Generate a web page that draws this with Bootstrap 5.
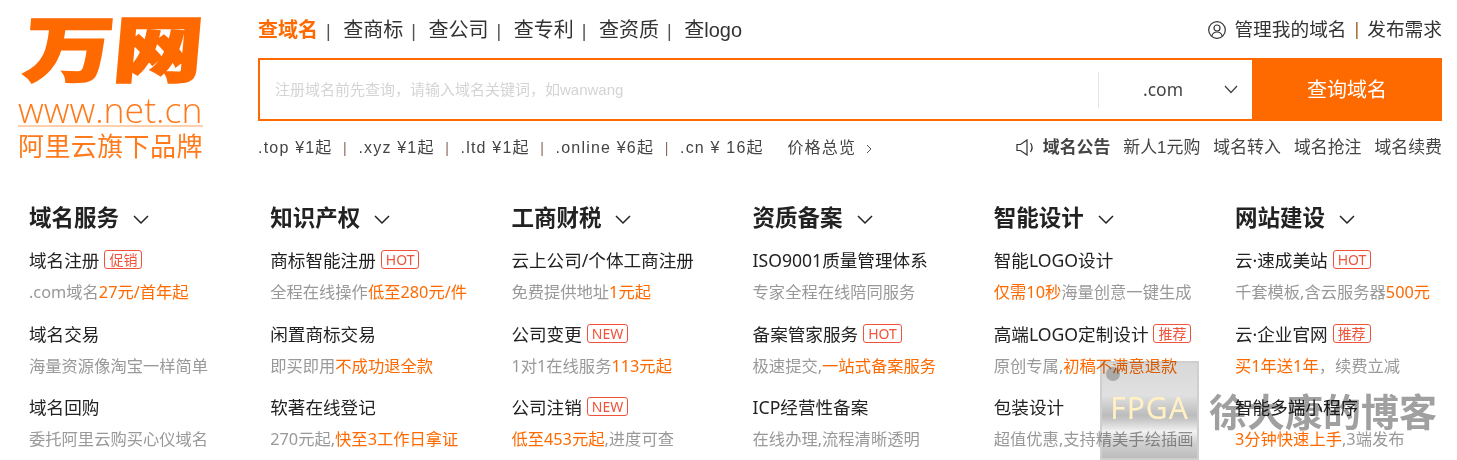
<!DOCTYPE html>
<html lang="zh-CN">
<head>
<meta charset="UTF-8" />
<title>万网</title>
<link href="https://cdn.jsdelivr.net/npm/bootstrap@5.3.0/dist/css/bootstrap.min.css" rel="stylesheet" />
<style>
  html, body { height: 460px; overflow: hidden; }
  body { position: relative; background: #fff; color: #333; font-family: "Noto Sans", "Noto Sans CJK SC", sans-serif; }
  a { color: inherit; text-decoration: none; }
  .orange { color: #ff6a00; }
  .top-wrap { padding: 0 15px 0 17px; }
  .logo-box { width: 241px; height: 170px; flex: none; padding-left: 1px; color: #ff6a00; }
  .logo-cn { font-family: "Noto Sans CJK SC", sans-serif; font-weight: 900; font-size: 72px; line-height: 72px; height: 91px; padding-top: 9px; -webkit-text-stroke: 2px #ff6a00; transform: translateX(3px) scaleX(1.24) skewX(-4deg); transform-origin: left bottom; white-space: nowrap; }
  .logo-url { font-family: "Open Sans", sans-serif; font-weight: 300; font-size: 35.6px; line-height: 36px; width: 185px; height: 32px; padding-bottom: 2px; border-bottom: 2px solid #ffd0ab; box-sizing: content-box; white-space: nowrap; color: #ff7a1a; }
  .logo-sub { font-family: "Noto Sans CJK SC", sans-serif; font-size: 26px; line-height: 36px; width: 185px; letter-spacing: .4px; white-space: nowrap; color: #ff7a1a; }
  .main-col { flex: 1; min-width: 0; }
  .search-nav { height: 58px; padding-top: 2px; font-family: "Liberation Sans", "Noto Sans CJK SC", sans-serif; font-size: 20px; color: #333; }
  .search-nav .sep { margin: 0 7px 0 8px; font-size: 18px; color: #555; }
  .user-links { font-size: 18.7px; }
  .search-nav .user-links .sep { margin: 0 8px 0 8px; color: #a0662e; }
  .search-box { height: 63px; border: 2px solid #ff6a00; }
  .search-input { flex: 1; min-width: 0; border: 0; outline: 0; padding: 2px 15px 0; font-size: 15px; font-family: "Liberation Sans", "Noto Sans CJK SC", sans-serif; }
  .search-input::placeholder { color: #d4d4d4; }
  .suffix-pick { width: 154px; border-left: 1px solid #e4e4e4; height: 36px; padding: 0 14px 0 44px; font-size: 17.5px; color: #444; }
  .search-btn { width: 190px; margin: -2px -2px -2px 0; background: #ff6a00; color: #fff; font-size: 20px; border: 0; border-radius: 0; }
  .search-btn:hover { background: #ff6a00; color: #fff; }
  .sub-row { height: 52px; padding-top: 2px; }
  .price-links { font-family: "Liberation Sans", "Noto Sans CJK SC", sans-serif; font-size: 16px; letter-spacing: 1.2px; color: #444; white-space: nowrap; }
  .price-links .sep { margin: 0 10.500px; font-size: 14px; color: #8a6a5a; }
  .price-all { margin-left: 18px; }
  .notice { font-family: "Liberation Sans", "Noto Sans CJK SC", sans-serif; font-size: 16.9px; color: #444; white-space: nowrap; }
  .notice b { color: #444; margin-right: 13px; }
  .notice a { margin-left: 13px; }
  .notice b + a { margin-left: 0; }
  .cat-grid { display: grid; grid-template-columns: repeat(6, 241.2px); padding-left: 29px; margin-top: 29px; }
  .cat-head { font-size: 22.5px; font-weight: 700; color: #222; line-height: 32px; margin-bottom: 13px; white-space: nowrap; }
  .cat-head svg { margin-left: 14px; vertical-align: 1px; }
  .cat-item { height: 73.5px; white-space: nowrap; }
  .cat-title { font-size: 17.6px; line-height: 26px; color: #222; }
  .cat-desc { font-size: 16.3px; line-height: 24px; margin-top: 7px; color: #999; }
  .tag { display: inline-block; font-size: 14px; line-height: 17px; padding: 0 4px; margin-left: 5px; border: 1px solid #f0533a; border-radius: 3px; color: #f0533a; vertical-align: 2px; }
  .wm-box { position: absolute; left: 1100px; top: 361px; width: 99px; height: 99px; mix-blend-mode: multiply; background: linear-gradient(#d8d8d8 0, #e0e0e0 34%, #bcbcbc 55%, #c8c8c8 60%, #f2f2f2 72%, #d0d0d0 85%, #bcbcbc 100%); border: 2px solid #cfcfcf; pointer-events: none; }
  .wm-dot { position: absolute; left: 4px; top: 4px; width: 14px; height: 14px; border-radius: 50%; background: #aaa; }
  .wm-fpga { position: absolute; left: 1100px; top: 361px; width: 99px; color: #fff1c4; font-size: 30px; line-height: 94px; text-align: center; pointer-events: none; letter-spacing: 1px; }
  .wm-text { position: absolute; left: 1209px; top: 387px; font-size: 38px; line-height: 46px; font-weight: 700; color: #a0a0a0; mix-blend-mode: multiply; white-space: nowrap; pointer-events: none; font-family: "Noto Sans CJK SC", sans-serif; }
</style>
</head>
<body>
  <div class="top-wrap d-flex">
    <a class="logo-box d-block" href="#">
      <div class="logo-cn">万网</div>
      <div class="logo-url">www.net.cn</div>
      <div class="logo-sub">阿里云旗下品牌</div>
    </a>
    <div class="main-col">
      <div class="search-nav d-flex align-items-center justify-content-between">
        <div>
          <a class="orange fw-bold" href="#">查域名</a><span class="sep">|</span>
          <a href="#">查商标</a><span class="sep">|</span>
          <a href="#">查公司</a><span class="sep">|</span>
          <a href="#">查专利</a><span class="sep">|</span>
          <a href="#">查资质</a><span class="sep">|</span>
          <a href="#">查logo</a>
        </div>
        <div class="user-links d-flex align-items-center">
          <svg width="18" height="18" viewBox="0 0 18 18" fill="none" stroke="#333" stroke-width="1.2" class="me-2"><circle cx="9" cy="9" r="8.300"/><circle cx="9" cy="7" r="3"/><path d="M3.800 15.200c.6-2.800 2.600-4.200 5.200-4.200s4.600 1.400 5.200 4.200"/></svg>
          <a href="#">管理我的域名</a><span class="sep">|</span><a href="#">发布需求</a>
        </div>
      </div>
      <div class="search-box d-flex align-items-center">
        <input class="search-input" type="text" placeholder="注册域名前先查询，请输入域名关键词，如wanwang" />
        <div class="suffix-pick d-flex align-items-center justify-content-between">
          <span>.com</span>
          <svg width="14" height="9" viewBox="0 0 14 9" fill="none" stroke="#444" stroke-width="1.3"><path d="M1 1l6 6.500L13 1"/></svg>
        </div>
        <button class="search-btn btn align-self-stretch" type="button">查询域名</button>
      </div>
      <div class="sub-row d-flex align-items-center justify-content-between">
        <div class="price-links">
          <a href="#">.top ¥1起</a><span class="sep">|</span><a href="#">.xyz ¥1起</a><span class="sep">|</span><a href="#">.ltd ¥1起</a><span class="sep">|</span><a href="#">.online ¥6起</a><span class="sep">|</span><a href="#">.cn ¥ 16起</a>
          <a class="price-all" href="#">价格总览
            <svg class="ms-1" width="7" height="10" viewBox="0 0 7 10" fill="none" stroke="#555" stroke-width="1"><path d="M1 1l4 4-4 4"/></svg></a>
        </div>
        <div class="notice d-flex align-items-center">
          <svg class="me-2" width="19" height="17" viewBox="0 0 19 17" fill="none" stroke="#333" stroke-width="1.2"><path d="M1 5.500h3.500L11 1v15L4.500 11.500H1z"/><path d="M14.500 4c2 2.800 2 6.200 0 9"/></svg>
          <b>域名公告</b><a href="#">新人1元购</a><a href="#">域名转入</a><a href="#">域名抢注</a><a href="#">域名续费</a>
        </div>
      </div>
    </div>
  </div>

  <div class="cat-grid">
    <div>
      <div class="cat-head">域名服务<svg width="16" height="10" viewBox="0 0 16 10" fill="none" stroke="#222" stroke-width="1.500"><path d="M1 1l7 7 7-7"/></svg></div>
      <div class="cat-item"><div class="cat-title">域名注册<span class="tag">促销</span></div><div class="cat-desc">.com域名<span class="orange">27元/首年起</span></div></div>
      <div class="cat-item"><div class="cat-title">域名交易</div><div class="cat-desc">海量资源像淘宝一样简单</div></div>
      <div class="cat-item"><div class="cat-title">域名回购</div><div class="cat-desc">委托阿里云购买心仪域名</div></div>
    </div>
    <div>
      <div class="cat-head">知识产权<svg width="16" height="10" viewBox="0 0 16 10" fill="none" stroke="#222" stroke-width="1.500"><path d="M1 1l7 7 7-7"/></svg></div>
      <div class="cat-item"><div class="cat-title">商标智能注册<span class="tag">HOT</span></div><div class="cat-desc">全程在线操作<span class="orange">低至280元/件</span></div></div>
      <div class="cat-item"><div class="cat-title">闲置商标交易</div><div class="cat-desc">即买即用<span class="orange">不成功退全款</span></div></div>
      <div class="cat-item"><div class="cat-title">软著在线登记</div><div class="cat-desc">270元起,<span class="orange">快至3工作日拿证</span></div></div>
    </div>
    <div>
      <div class="cat-head">工商财税<svg width="16" height="10" viewBox="0 0 16 10" fill="none" stroke="#222" stroke-width="1.500"><path d="M1 1l7 7 7-7"/></svg></div>
      <div class="cat-item"><div class="cat-title">云上公司/个体工商注册</div><div class="cat-desc">免费提供地址<span class="orange">1元起</span></div></div>
      <div class="cat-item"><div class="cat-title">公司变更<span class="tag">NEW</span></div><div class="cat-desc">1对1在线服务<span class="orange">113元起</span></div></div>
      <div class="cat-item"><div class="cat-title">公司注销<span class="tag">NEW</span></div><div class="cat-desc"><span class="orange">低至453元起</span>,进度可查</div></div>
    </div>
    <div>
      <div class="cat-head">资质备案<svg width="16" height="10" viewBox="0 0 16 10" fill="none" stroke="#222" stroke-width="1.500"><path d="M1 1l7 7 7-7"/></svg></div>
      <div class="cat-item"><div class="cat-title">ISO9001质量管理体系</div><div class="cat-desc">专家全程在线陪同服务</div></div>
      <div class="cat-item"><div class="cat-title">备案管家服务<span class="tag">HOT</span></div><div class="cat-desc">极速提交,<span class="orange">一站式备案服务</span></div></div>
      <div class="cat-item"><div class="cat-title">ICP经营性备案</div><div class="cat-desc">在线办理,流程清晰透明</div></div>
    </div>
    <div>
      <div class="cat-head">智能设计<svg width="16" height="10" viewBox="0 0 16 10" fill="none" stroke="#222" stroke-width="1.500"><path d="M1 1l7 7 7-7"/></svg></div>
      <div class="cat-item"><div class="cat-title">智能LOGO设计</div><div class="cat-desc"><span class="orange">仅需10秒</span>海量创意一键生成</div></div>
      <div class="cat-item"><div class="cat-title">高端LOGO定制设计<span class="tag">推荐</span></div><div class="cat-desc">原创专属,<span class="orange">初稿不满意退款</span></div></div>
      <div class="cat-item"><div class="cat-title">包装设计</div><div class="cat-desc">超值优惠,支持精美手绘插画</div></div>
    </div>
    <div>
      <div class="cat-head">网站建设<svg width="16" height="10" viewBox="0 0 16 10" fill="none" stroke="#222" stroke-width="1.500"><path d="M1 1l7 7 7-7"/></svg></div>
      <div class="cat-item"><div class="cat-title">云·速成美站<span class="tag">HOT</span></div><div class="cat-desc">千套模板,含云服务器<span class="orange">500元</span></div></div>
      <div class="cat-item"><div class="cat-title">云·企业官网<span class="tag">推荐</span></div><div class="cat-desc"><span class="orange">买1年送1年</span>，续费立减</div></div>
      <div class="cat-item"><div class="cat-title">智能多端小程序</div><div class="cat-desc"><span class="orange">3分钟快速上手</span>,3端发布</div></div>
    </div>
  </div>

  <div class="wm-box"><span class="wm-dot"></span></div>
  <div class="wm-fpga">FPGA</div>
  <div class="wm-text">徐大康的博客</div>

  <script src="https://cdn.jsdelivr.net/npm/bootstrap@5.3.0/dist/js/bootstrap.bundle.min.js"></script>
</body>
</html>
